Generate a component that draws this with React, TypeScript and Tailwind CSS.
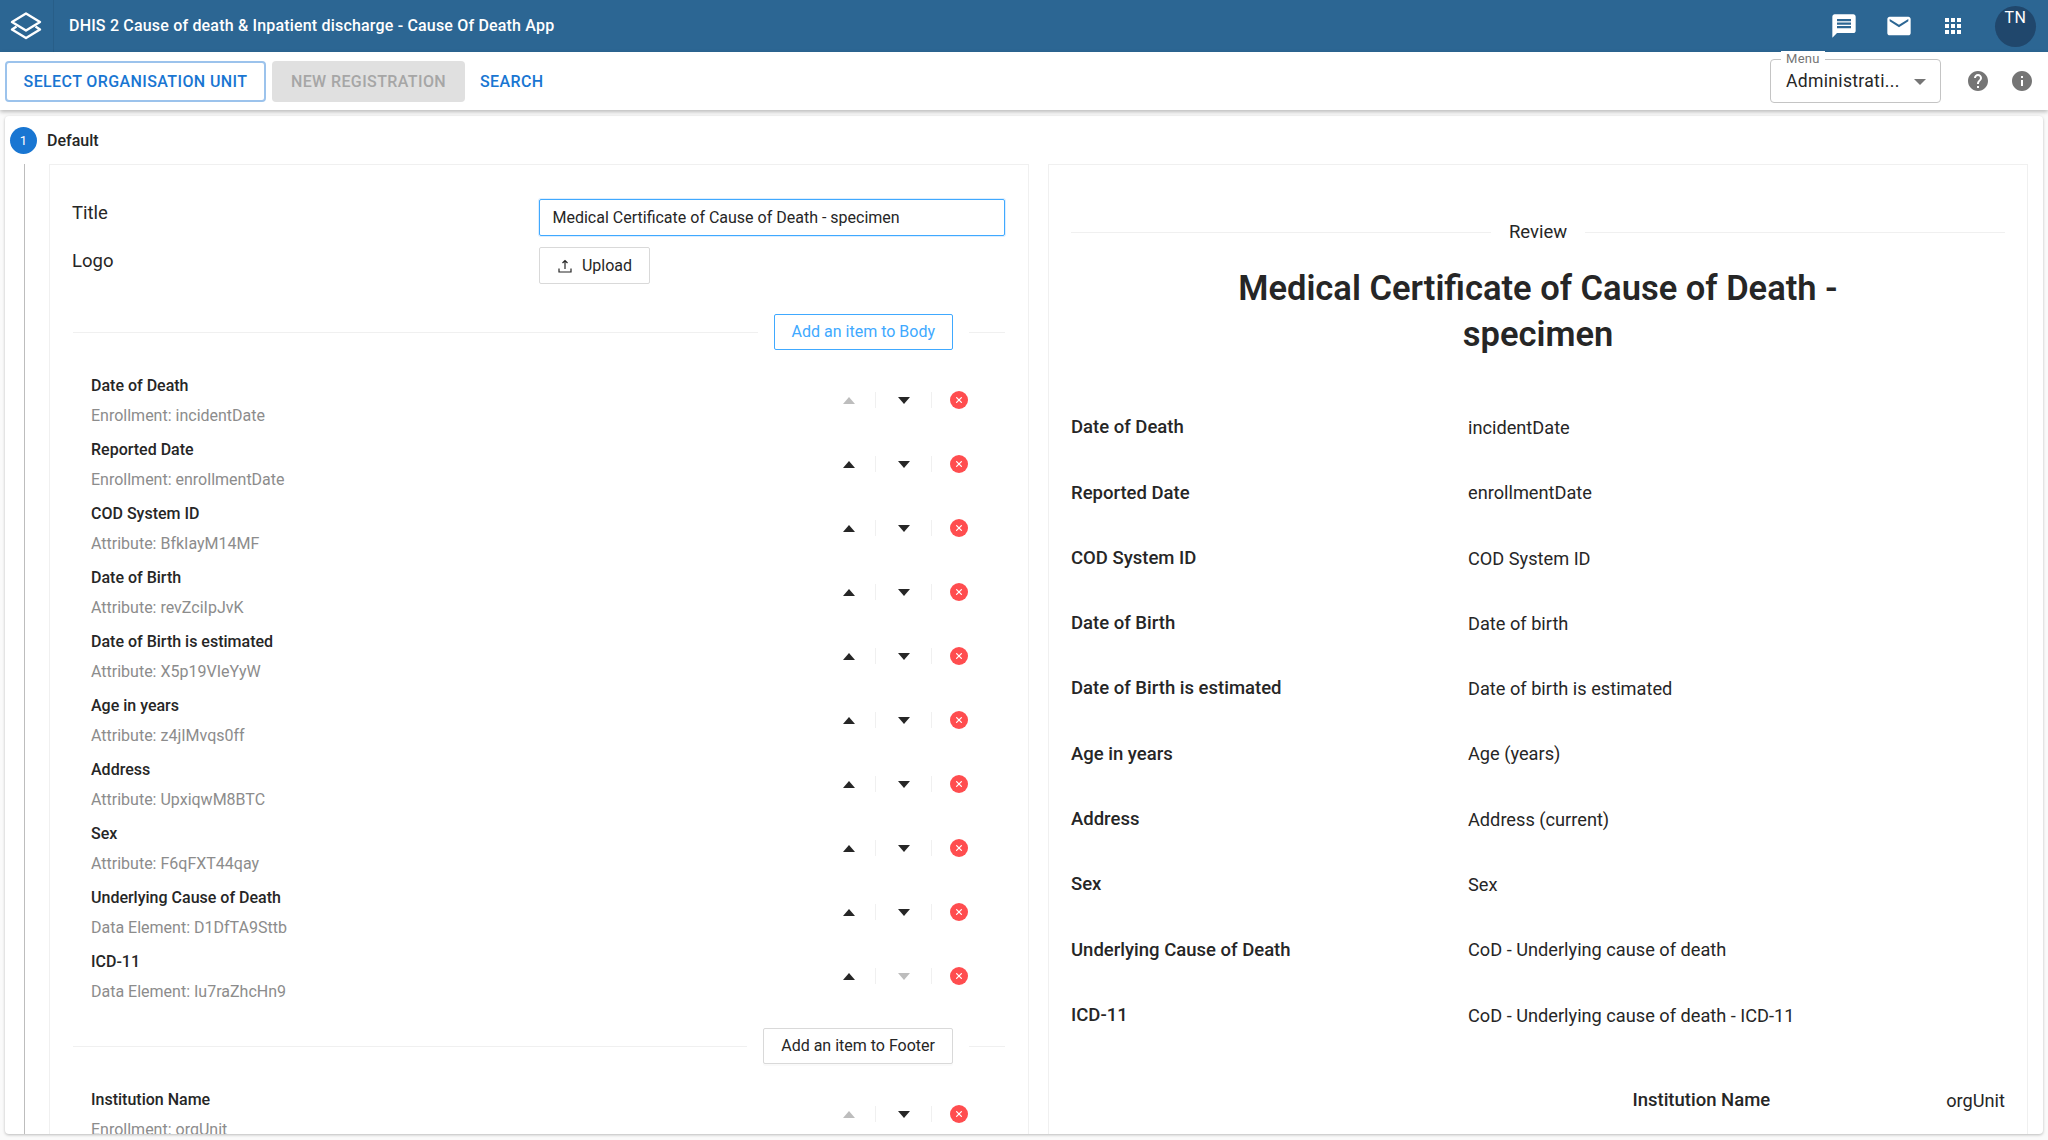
const leftRows = [
  { label: "Date of Death", sub: "Enrollment: incidentDate", upOff: true },
  { label: "Reported Date", sub: "Enrollment: enrollmentDate" },
  { label: "COD System ID", sub: "Attribute: BfkIayM14MF" },
  { label: "Date of Birth", sub: "Attribute: revZciIpJvK" },
  { label: "Date of Birth is estimated", sub: "Attribute: X5p19VIeYyW" },
  { label: "Age in years", sub: "Attribute: z4jIMvqs0ff" },
  { label: "Address", sub: "Attribute: UpxiqwM8BTC" },
  { label: "Sex", sub: "Attribute: F6qFXT44qay" },
  { label: "Underlying Cause of Death", sub: "Data Element: D1DfTA9Sttb" },
  { label: "ICD-11", sub: "Data Element: Iu7raZhcHn9", downOff: true },
];

const reviewRows = [
  ["Date of Death", "incidentDate"],
  ["Reported Date", "enrollmentDate"],
  ["COD System ID", "COD System ID"],
  ["Date of Birth", "Date of birth"],
  ["Date of Birth is estimated", "Date of birth is estimated"],
  ["Age in years", "Age (years)"],
  ["Address", "Address (current)"],
  ["Sex", "Sex"],
  ["Underlying Cause of Death", "CoD - Underlying cause of death"],
  ["ICD-11", "CoD - Underlying cause of death - ICD-11"],
];

function MaterialIcon({ d, className }: { d: string; className?: string }) {
  return (
    <svg viewBox="0 0 24 24" fill="currentColor" className={className}>
      <path d={d} />
    </svg>
  );
}

function Controls({ upOff, downOff }: { upOff?: boolean; downOff?: boolean }) {
  return (
    <div className="flex items-center">
      <div className="w-[55px] flex justify-center pl-[3px]">
        <div className={`w-0 h-0 border-x-[6.5px] border-x-transparent border-b-[7px] ${upOff ? "border-b-[#bdbdbd]" : "border-b-[#262626]"}`} />
      </div>
      <div className="w-px h-4 bg-[#f0f0f0]" />
      <div className="w-[55px] flex justify-center">
        <div className={`w-0 h-0 border-x-[6.5px] border-x-transparent border-t-[7px] ${downOff ? "border-t-[#bdbdbd]" : "border-t-[#262626]"}`} />
      </div>
      <div className="w-px h-4 bg-[#f0f0f0]" />
      <div className="w-[54px] flex justify-center">
        <div className="w-[18px] h-[18px] rounded-full bg-[#ff4d4f] text-white flex items-center justify-center">
          <svg viewBox="0 0 10 10" className="w-2 h-2" stroke="currentColor" strokeWidth="1.6" strokeLinecap="round">
            <path d="M2 2l6 6M8 2l-6 6" />
          </svg>
        </div>
      </div>
    </div>
  );
}

function ItemRow({ label, sub, upOff, downOff }: { label: string; sub: string; upOff?: boolean; downOff?: boolean }) {
  return (
    <div className="h-16 pl-[18px] flex items-center justify-between">
      <div className="flex flex-col gap-2 pt-[2px]">
        <div className="text-base leading-[22px] font-medium text-[#262626]">{label}</div>
        <div className="text-base leading-[22px] text-[#8c8c8c]">{sub}</div>
      </div>
      <div className="pr-[19px]">
        <Controls upOff={upOff} downOff={downOff} />
      </div>
    </div>
  );
}

function SectionButton({ text, active }: { text: string; active?: boolean }) {
  return (
    <div className="flex items-center">
      <div className="flex-1 h-px bg-[#f0f0f0]" />
      <button className={`ml-4 mr-4 h-9 px-[17px] rounded-[2px] border bg-white text-base ${active ? "border-[#40a9ff] text-[#40a9ff]" : "border-[#d9d9d9] text-[#262626] shadow-[0_2px_0_rgba(0,0,0,0.02)]"}`}>
        {text}
      </button>
      <div className="w-9 h-px bg-[#f0f0f0]" />
    </div>
  );
}

export default function App() {
  return (
    <div className="w-full h-[1140px] overflow-hidden flex flex-col bg-[#fafafa] font-['Roboto',sans-serif] text-[#262626]">
      <header className="h-[52px] shrink-0 bg-[#2c6693] text-white flex items-center">
        <div className="w-[54px] h-full border-r border-[#285e88] flex items-center pl-[10px]">
          <svg viewBox="0 0 32 28" className="w-[32px] h-[28px]" fill="none" stroke="currentColor" strokeWidth="2.4" strokeLinejoin="round">
            <path d="M16 1.5 L30 10 L16 18.5 L2 10 Z" />
            <path d="M6.5 14.5 L2 17.5 L16 26 L30 17.5 L25.5 14.5" />
          </svg>
        </div>
        <div className="ml-[15px] text-base font-medium tracking-[0.18px]">DHIS 2 Cause of death &amp; Inpatient discharge - Cause Of Death App</div>
        <div className="ml-auto flex items-center">
          <MaterialIcon className="w-7 h-7" d="M20 2H4c-1.1 0-1.99.9-1.99 2L2 22l4-4h14c1.1 0 2-.9 2-2V4c0-1.1-.9-2-2-2zm-2 12H6v-2h12v2zm0-3H6V9h12v2zm0-3H6V6h12v2z" />
          <MaterialIcon className="w-7 h-7 ml-[27px]" d="M20 4H4c-1.1 0-1.99.9-1.99 2L2 18c0 1.1.9 2 2 2h16c1.1 0 2-.9 2-2V6c0-1.1-.9-2-2-2zm0 4l-8 5-8-5V6l8 5 8-5v2z" />
          <MaterialIcon className="w-6 h-6 ml-[28px]" d="M4 8h4V4H4v4zm6 12h4v-4h-4v4zm-6 0h4v-4H4v4zm0-6h4v-4H4v4zm6 0h4v-4h-4v4zm6-10v4h4V4h-4zm-6 4h4V4h-4v4zm6 6h4v-4h-4v4zm0 6h4v-4h-4v4z" />
          <div className="ml-[30px] mr-[12px] w-[41px] h-[41px] rounded-full bg-[#20476c] flex justify-center text-base tracking-wide pt-[2px] leading-5">
            TN
          </div>
        </div>
      </header>

      <div className="relative z-10 h-[58px] shrink-0 bg-white shadow-[0_2px_4px_rgba(0,0,0,0.25)] flex items-center pl-[5px]">
        <button className="w-[261px] h-[41px] pt-[1px] border-2 border-[#9cc3ec] rounded text-base font-medium tracking-[0.4px] text-[#1976d2]">SELECT ORGANISATION UNIT</button>
        <button className="ml-[6px] w-[193px] h-[41px] pt-[1px] bg-[#e0e0e0] rounded text-base font-medium tracking-[0.4px] text-[#a6a6a6]">NEW REGISTRATION</button>
        <span className="ml-[15px] pt-[1px] text-base font-medium tracking-[0.4px] text-[#1976d2]">SEARCH</span>
        <div className="ml-auto flex items-center">
          <div className="relative w-[171px] h-[44px] border border-[#c4c4c4] rounded flex items-center pl-[15px] text-[17.6px] tracking-[0.3px] text-[#262626]">
            <span className="absolute -top-[9px] left-[10px] px-[5px] bg-white text-[13px] leading-4 text-[#757575]">Menu</span>
            Administrati...
            <div className="absolute right-[14px] top-[19px] w-0 h-0 border-x-[6px] border-x-transparent border-t-[6px] border-t-[#757575]" />
          </div>
          <MaterialIcon className="w-6 h-6 ml-[25px] text-[#757575]" d="M12 2C6.48 2 2 6.48 2 12s4.48 10 10 10 10-4.48 10-10S17.52 2 12 2zm1 17h-2v-2h2v2zm2.07-7.75l-.9.92C13.45 12.9 13 13.5 13 15h-2v-.5c0-1.1.45-2.1 1.17-2.83l1.24-1.26c.37-.36.59-.86.59-1.41 0-1.1-.9-2-2-2s-2 .9-2 2H8c0-2.21 1.79-4 4-4s4 1.79 4 4c0 .88-.36 1.68-.93 2.25z" />
          <MaterialIcon className="w-6 h-6 ml-[20px] mr-[14px] text-[#757575]" d="M12 2C6.48 2 2 6.48 2 12s4.48 10 10 10 10-4.48 10-10S17.52 2 12 2zm1 15h-2v-6h2v6zm0-8h-2V7h2v2z" />
        </div>
      </div>

      <main className="mt-[6px] mx-[5px] h-[1018px] shrink-0 overflow-hidden bg-white rounded shadow-[0_1px_3px_rgba(0,0,0,0.25)]">
        <div className="pt-[11px] pl-[5px] flex items-center">
          <div className="w-[27px] h-[27px] rounded-full bg-[#1976d2] text-white text-[13px] flex items-center justify-center">1</div>
          <span className="ml-[10px] text-base font-medium">Default</span>
        </div>
        <div className="mt-[10px] ml-[19px] pl-[24px] border-l border-[#bdbdbd] h-[1000px] flex gap-[19px] items-start">
          <section className="w-[980px] h-[1100px] shrink-0 border border-[#f0f0f0] px-[23px] pt-[34px]">
            <div className="flex">
              <label className="-ml-px w-[468px] text-[18.5px] leading-6 pt-[2px]">Title</label>
              <div className="w-[466px] h-[37px] border border-[#40a9ff] rounded-[2px] shadow-[0_0_0_1px_rgba(24,144,255,0.15)] px-[12px] flex items-center text-base">
                Medical Certificate of Cause of Death - specimen
              </div>
            </div>
            <div className="flex mt-[11px]">
              <label className="-ml-px w-[467px] text-[18.5px] leading-6 pt-[2px]">Logo</label>
              <button className="w-[111px] h-[37px] border border-[#d9d9d9] rounded-[2px] flex items-center justify-center gap-[9px] text-base">
                <svg viewBox="0 0 16 16" className="w-[16px] h-[16px]" fill="none" stroke="currentColor" strokeWidth="1.2">
                  <path d="M8 11V2.5M5.5 5L8 2.5 10.5 5M2 10.5V14h12v-3.5" />
                </svg>
                Upload
              </button>
            </div>

            <div className="mt-[30px]">
              <SectionButton text="Add an item to Body" active />
            </div>
            <div className="mt-[18px]">
              {leftRows.map((r) => (
                <ItemRow key={r.label} {...r} />
              ))}
            </div>
            <div className="mt-[20px]">
              <SectionButton text="Add an item to Footer" />
            </div>
            <div className="mt-[18px]">
              <ItemRow label="Institution Name" sub="Enrollment: orgUnit" upOff />
            </div>
          </section>

          <section className="w-[980px] h-[1100px] shrink-0 border border-[#f0f0f0] px-[22px] pt-[55px]">
            <div className="flex items-center">
              <div className="flex-1 h-px bg-[#f0f0f0]" />
              <span className="px-[18px] text-[18.5px] leading-6">Review</span>
              <div className="flex-1 h-px bg-[#f0f0f0]" />
            </div>
            <h2 className="mt-[21px] mx-auto w-[660px] text-center text-[34.5px] leading-[46px] font-semibold">
              Medical Certificate of Cause of Death - specimen
            </h2>
            <div className="mt-[38px]">
              {reviewRows.map(([label, value]) => (
                <div key={label} className="h-[65.3px] flex items-center text-[18.2px]">
                  <div className="w-[397px] pt-[1px] text-[18.5px] font-medium">{label}</div>
                  <div>{value}</div>
                </div>
              ))}
            </div>
            <div className="mt-[39px] flex justify-end text-[18.2px]">
              <div className="text-[18.5px] font-medium">Institution Name</div>
              <div className="ml-[176px]">orgUnit</div>
            </div>
          </section>
        </div>
      </main>
    </div>
  );
}
